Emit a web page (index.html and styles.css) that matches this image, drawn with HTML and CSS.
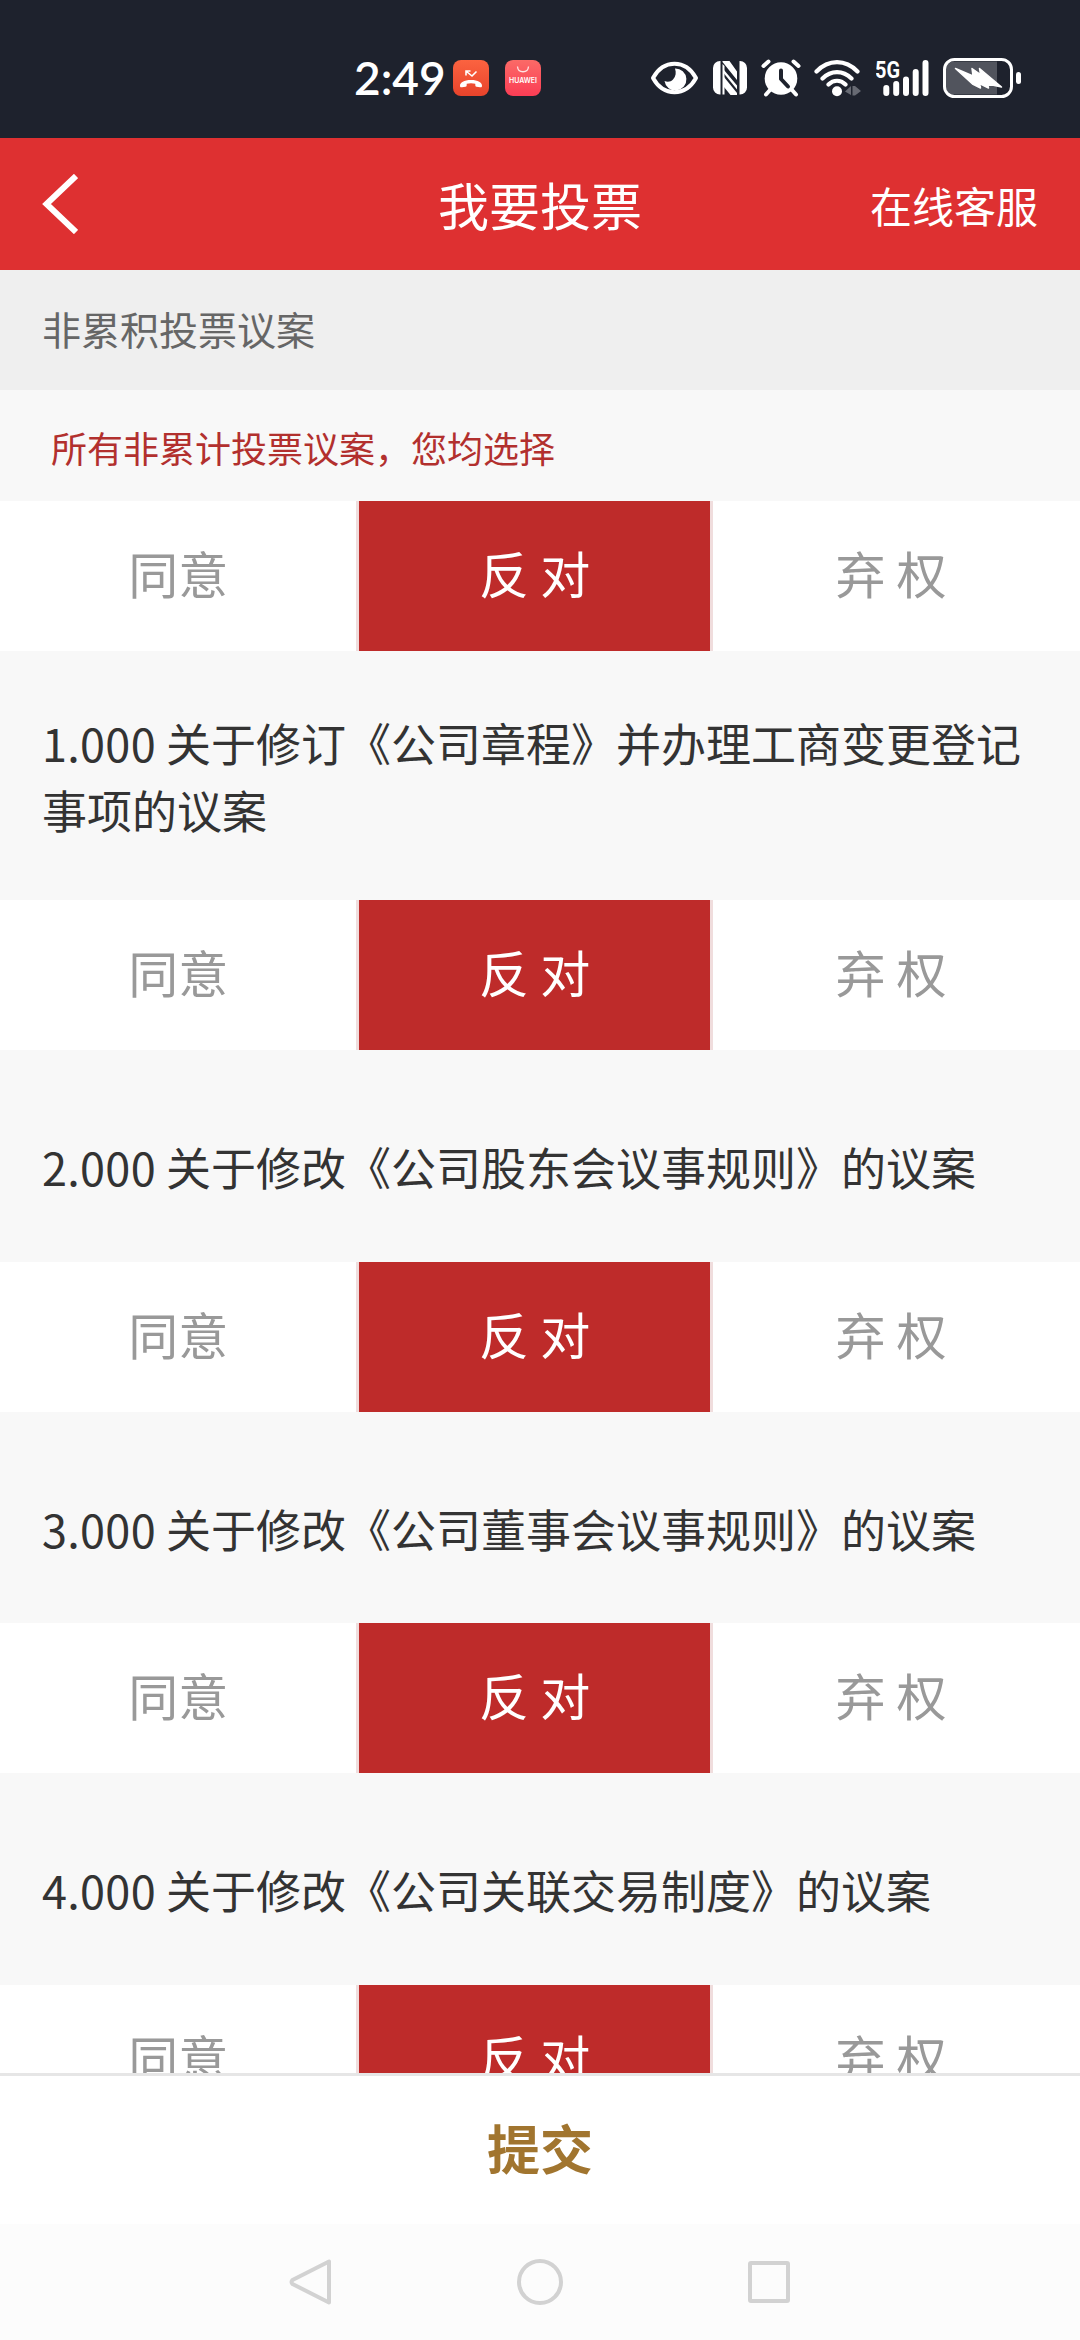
FILE: index.html
```
<!DOCTYPE html>
<html lang="zh-CN">
<head>
  <meta charset="UTF-8" />
  <meta name="viewport" content="width=device-width, initial-scale=1.0" />
  <title>我要投票</title>
  <link rel="stylesheet" href="styles.css">
</head>
<body>
  <div class="status-bar">
    <span class="time">2:49</span>
    <svg class="app-icon" width="36" height="36" viewBox="0 0 36 36">
      <defs>
        <linearGradient id="call" x1="0" y1="0" x2="0" y2="1"><stop offset="0" stop-color="#fb6340" /><stop offset="1" stop-color="#e8432b" /></linearGradient>
        <linearGradient id="store" x1="0" y1="0" x2="0" y2="1"><stop offset="0" stop-color="#fb6a67" /><stop offset="1" stop-color="#fb3d55" /></linearGradient>
      </defs>
      <rect width="36" height="36" rx="8" fill="url(#call)" />
      <path d="M13 15.500V11h4.500M13.500 11.500l5.500 4.500 4.500-4.500" fill="none" stroke="#fff" stroke-width="1.600" />
      <path d="M7 25.500c0-3 4-5.500 11-5.500s11 2.500 11 5.500c0 1.700-.6 2-2 1.800l-3.500-.5c-1-.2-1.200-.7-1.200-2v-1c-2.800-.8-5.800-.8-8.600 0v1c0 1.300-.2 1.800-1.200 2L9 27.300c-1.400.2-2-.1-2-1.800z" fill="#fff" />
    </svg>
    <svg class="app-icon store" width="36" height="36" viewBox="0 0 36 36">
      <rect width="36" height="36" rx="8" fill="url(#store)" />
      <path d="M12.500 6.500c.5 7 10.500 7 11 0" fill="none" stroke="#ffe3e3" stroke-width="1.300" />
      <text x="18" y="23" text-anchor="middle" textLength="28" lengthAdjust="spacingAndGlyphs" class="store-text">HUAWEI</text>
    </svg>
    <div class="status-icons">
      <svg width="49" height="40" viewBox="0 0 49 40">
        <path d="M3 20C8 11 15.500 5.800 24.500 5.800S41 11 46 20c-5 9-12.500 14.200-21.500 14.200S8 29 3 20z" fill="none" stroke="#fff" stroke-width="4" stroke-linejoin="round" />
        <path d="M25 10.500a11 11 0 1 1-10.500 12.500c3 1.300 6.500.8 8.500-1.500 3-3.300 3.300-7 2-11z" fill="#fff" />
      </svg>
      <svg class="nfc" width="34" height="40" viewBox="0 0 34 40">
        <path d="M7 3h.5v33.500H7a7 7 0 0 1-7-7V10a7 7 0 0 1 7-7zM9.500 3h7l7.500 10.500V22L9.500 4zM26.500 3H27a7 7 0 0 1 7 7v19.500a7 7 0 0 1-7 7h-.5z" fill="#fff" />
        <path d="M11 12l13 15.500v4L11 15.500zM11 19l13 16v2h-6.500L11 29z" fill="#fff" />
        <path d="M9.500 6v30.500h2V8z" fill="#fff" />
      </svg>
      <svg class="alarm" width="40" height="40" viewBox="0 0 40 40">
        <circle cx="20" cy="20.500" r="16.300" fill="#fff" />
        <path d="M2.500 8l5-4.500M37.500 8l-5-4.500M9 32l-4 4.500M31 32l4 4.500" stroke="#fff" stroke-width="4" stroke-linecap="round" />
        <path d="M20 12.500v8.500l7 7.500" fill="none" stroke="#1e222d" stroke-width="4" stroke-linecap="round" stroke-linejoin="round" />
      </svg>
      <svg class="wifi" width="48" height="40" viewBox="0 0 48 40">
        <path d="M2.500 13.500c12-12.500 29-12.500 41 0M8.500 20.500c8.500-8.500 20.500-8.500 29 0M14.500 26.500c5-5 12-5 17 0" fill="none" stroke="#fff" stroke-width="4.200" stroke-linecap="round" />
        <circle cx="23" cy="33.300" r="5" fill="#fff" />
        <path d="M31 33.500l6-5.500v9zM38.500 28h2.500l6 5-6 4.500h-2.500z" fill="#676a73" />
      </svg>
      <svg class="signal" width="54" height="40" viewBox="0 0 54 40">
        <text x="-1" y="19.500" textLength="25" lengthAdjust="spacingAndGlyphs" class="signal-text">5G</text>
        <path d="M10.300 30v5M20.200 26v9M30 21.500v13.500M39.700 14v21M49.500 5v30" stroke="#fff" stroke-width="6" stroke-linecap="round" />
      </svg>
      <svg class="battery" width="78" height="40" viewBox="0 0 78 40">
        <path d="M11 3.500h43v33H11a8 8 0 0 1-8-8v-17a8 8 0 0 1 8-8z" fill="#51545d" />
        <rect x="1.500" y="1.500" width="67" height="37" rx="10" fill="none" stroke="#fff" stroke-width="3" />
        <rect x="73" y="14" width="5" height="12" rx="2.500" fill="#fff" />
        <path d="M12.500 10.500l17.500 7.500-1-7.500 8.500 6-1-6L58.500 29l-14-3 1 4-9-4.500 1 4.500-8-4z" fill="#fff" stroke="#fff" stroke-width="1.500" stroke-linejoin="round" />
      </svg>
    </div>
  </div>

  <div class="header">
    <svg class="back" width="36" height="60" viewBox="0 0 36 60"><path d="M34 2L4.500 30 34 58" fill="none" stroke="#fff" stroke-width="6" /></svg>
    <h1>我要投票</h1>
    <a class="service">在线客服</a>
  </div>

  <div class="content">
    <div class="section-title">非累积投票议案</div>
    <div class="notice">所有非累计投票议案，您均选择</div>
    <div class="options">
      <div class="option">同意</div>
      <div class="option active">反 对</div>
      <div class="option">弃 权</div>
    </div>

    <div class="proposal two-lines"><p><span class="num">1.000</span> 关于修订《公司章程》并办理工商变更登记事项的议案</p></div>
    <div class="options">
      <div class="option">同意</div>
      <div class="option active">反 对</div>
      <div class="option">弃 权</div>
    </div>

    <div class="proposal"><p><span class="num">2.000</span> 关于修改《公司股东会议事规则》的议案</p></div>
    <div class="options">
      <div class="option">同意</div>
      <div class="option active">反 对</div>
      <div class="option">弃 权</div>
    </div>

    <div class="proposal"><p><span class="num">3.000</span> 关于修改《公司董事会议事规则》的议案</p></div>
    <div class="options">
      <div class="option">同意</div>
      <div class="option active">反 对</div>
      <div class="option">弃 权</div>
    </div>

    <div class="proposal"><p><span class="num">4.000</span> 关于修改《公司关联交易制度》的议案</p></div>
    <div class="options">
      <div class="option">同意</div>
      <div class="option active">反 对</div>
      <div class="option">弃 权</div>
    </div>
  </div>

  <div class="submit">提交</div>

  <div class="nav-bar">
    <svg width="46" height="50" viewBox="0 0 46 50"><path d="M41 4.500v41L4.500 27q-2-2 0-4z" fill="none" stroke="#d2d2d2" stroke-width="4" stroke-linejoin="round" /></svg>
    <svg width="46" height="46" viewBox="0 0 46 46"><circle cx="23" cy="23" r="21" fill="none" stroke="#d2d2d2" stroke-width="4" /></svg>
    <svg width="46" height="46" viewBox="0 0 46 46"><rect x="4" y="4" width="38" height="38" rx="1" fill="none" stroke="#d2d2d2" stroke-width="4" /></svg>
  </div>
</body>
</html>
```
FILE: styles.css
```
* {
  box-sizing: border-box;
}
body {
  margin: 0;
  height: 2340px;
  display: flex;
  flex-direction: column;
  overflow: hidden;
  background: #f8f8f8;
  font-family: "Noto Sans CJK SC", sans-serif;
}
h1, p {
  margin: 0;
  font-weight: normal;
}
svg {
  display: block;
  flex: none;
}

/* status bar */
.status-bar {
  height: 138px;
  flex: none;
  display: flex;
  align-items: center;
  padding: 18px 59px 0 354px;
  background: #1e222d;
  color: #fff;
}
.time {
  width: 99px;
  font-family: Lato, sans-serif;
  font-size: 46px;
  font-weight: 600;
  line-height: 40px;
  white-space: nowrap;
}
.store {
  margin-left: 16px;
}
.store-text {
  font-family: Inter, sans-serif;
  font-size: 7.5px;
  font-weight: 600;
  fill: #fff;
}
.status-icons {
  display: flex;
  margin-left: auto;
}
.nfc {
  margin-left: 14px;
}
.alarm {
  margin-left: 14px;
}
.wifi {
  margin-left: 13px;
}
.signal {
  margin-left: 14px;
}
.battery {
  margin-left: 13px;
}
.signal-text {
  font-family: Roboto, sans-serif;
  font-size: 23px;
  font-weight: 700;
  fill: #fff;
}

/* header */
.header {
  height: 132px;
  flex: none;
  display: grid;
  grid-template-columns: 1fr auto 1fr;
  align-items: center;
  padding: 0 42px;
  background: #de3031;
  color: #fff;
}
.header h1 {
  font-size: 51px;
  line-height: 132px;
}
.service {
  justify-self: end;
  font-size: 42px;
}

.content {
  flex: 1;
  min-height: 0;
  overflow: hidden;
}
.section-title {
  height: 120px;
  padding-left: 42px;
  background: #efefef;
  color: #666;
  font-size: 39px;
  line-height: 116px;
}
.notice {
  height: 111px;
  padding-left: 51px;
  color: #b2302e;
  font-size: 36px;
  line-height: 115px;
}

/* vote buttons */
.options {
  display: flex;
  height: 150px;
  background: #fff;
}
.option {
  width: 33%;
  color: #999;
  font-size: 50px;
  line-height: 142px;
  text-align: center;
}
.option.active {
  border: solid #f0dddd;
  border-width: 0 3px;
  background: #be2b2a;
  color: #fff;
}

.proposal {
  display: flex;
  align-items: center;
  height: 211.5px;
  padding: 22px 42px 0;
  color: #333;
  font-size: 45px;
  line-height: 67px;
}
.proposal.two-lines {
  height: 249px;
  padding-top: 0;
}
.num {
  letter-spacing: 0.3px;
}

.submit {
  height: 151px;
  flex: none;
  border-top: 3px solid #e6e6e6;
  background: #fff;
  color: #a1752f;
  font-size: 53px;
  font-weight: 700;
  line-height: 142px;
  text-align: center;
}
.nav-bar {
  height: 116px;
  flex: none;
  display: flex;
  justify-content: center;
  align-items: center;
  gap: 183px;
  background: #fcfcfc;
}
```
